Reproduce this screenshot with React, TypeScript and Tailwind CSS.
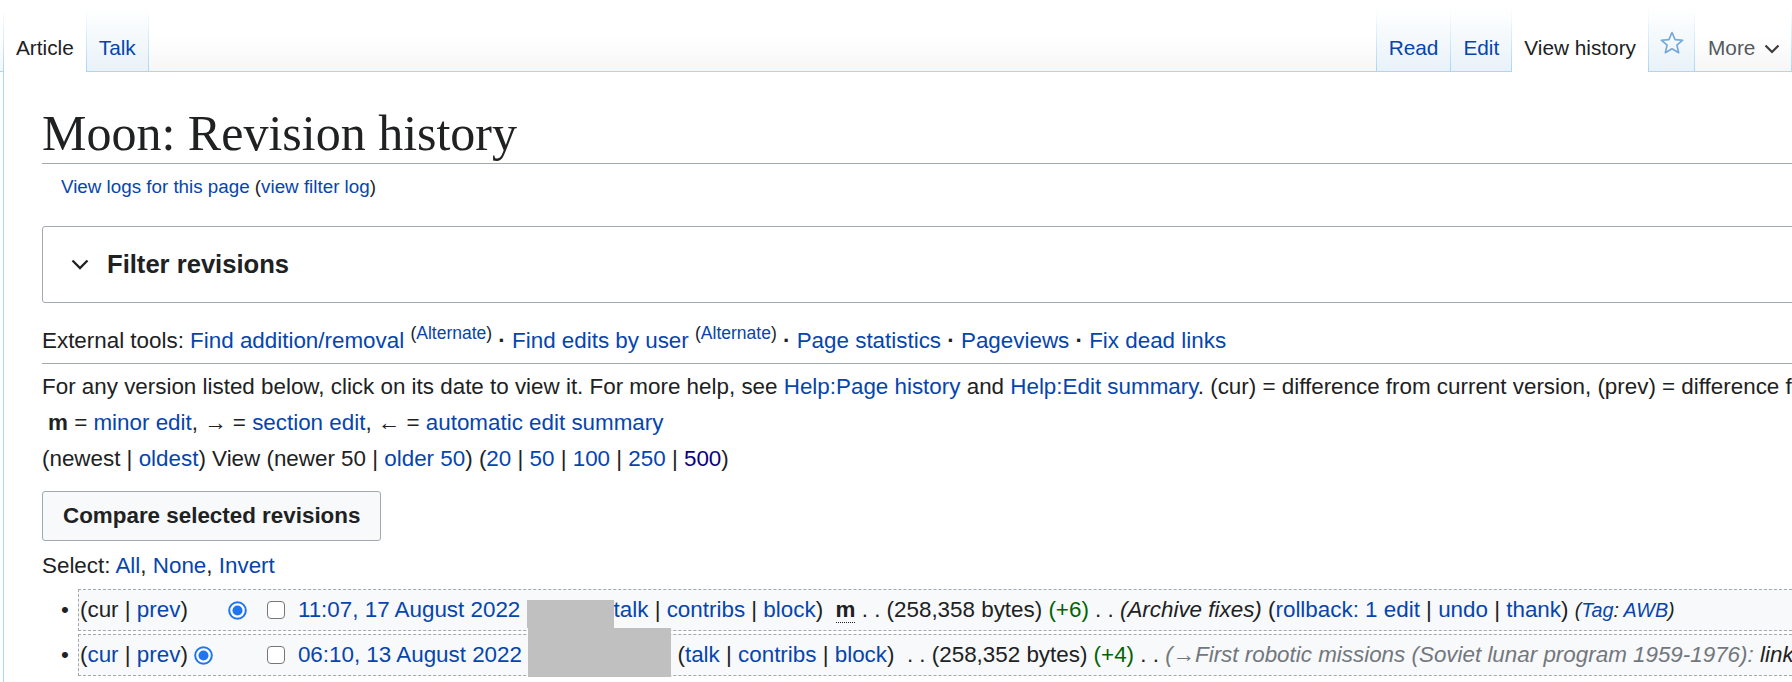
import React from "react";

const SANS = "font-['Liberation_Sans',Arial,sans-serif]";
const LINK = "text-[#0645ad]";

function Divider() {
  return (
    <div className="w-px self-stretch bg-[linear-gradient(to_bottom,rgba(167,215,249,0)_0%,#a7d7f9_100%)]" />
  );
}

function Tab({ label, selected }: { label: string; selected?: boolean }) {
  return (
    <div
      className={
        "h-full px-3 pt-[30px] text-[20.8px] leading-[20px] " +
        (selected
          ? "bg-white text-[#202122]"
          : "bg-[linear-gradient(to_top,#a7d7f9_0px,#a7d7f9_1px,#e8f2f8_1px,#ffffff_100%)] " + LINK)
      }
    >
      {label}
    </div>
  );
}

function Star() {
  return (
    <div className="flex h-full w-[45px] justify-center bg-[linear-gradient(to_top,#a7d7f9_0px,#a7d7f9_1px,#e8f2f8_1px,#ffffff_100%)] pt-[22px]">
      <svg width="26" height="26" viewBox="0 0 26 26">
        <path
          d="M13 2.5l3.1 7.1 7.6.6-5.8 5 1.8 7.5L13 18.7l-6.7 4 1.8-7.5-5.8-5 7.6-.6z"
          fill="none"
          stroke="#72a7d9"
          strokeWidth="1.6"
          strokeLinejoin="round"
        />
      </svg>
    </div>
  );
}

function More() {
  return (
    <div className="flex h-full w-[96px] items-start gap-[9px] pl-[13px] pt-[30px] text-[20.8px] leading-[20px] text-[#54595d]">
      <span>More</span>
      <svg width="16" height="10" viewBox="0 0 16 10" className="mt-[6px]">
        <path d="M1.5 1.5l6.5 6.5 6.5-6.5" fill="none" stroke="#3a3d40" strokeWidth="2.2" />
      </svg>
    </div>
  );
}

function Radio({ hidden }: { hidden?: boolean }) {
  return (
    <svg width="19" height="19" viewBox="0 0 19 19" className={hidden ? "invisible" : ""}>
      <circle cx="9.5" cy="9.5" r="8.3" fill="#fff" stroke="#1f76ee" strokeWidth="2" />
      <circle cx="9.5" cy="9.5" r="5" fill="#1f76ee" />
    </svg>
  );
}

function Checkbox() {
  return <span className="inline-block h-[18px] w-[18px] rounded-[4px] border-[1.5px] border-[#767676] bg-white" />;
}

function Sep() {
  return <span className="text-[#202122]"> | </span>;
}

function Row({
  first,
  date,
  children,
}: {
  first?: boolean;
  date: string;
  children: React.ReactNode;
}) {
  return (
    <div className="flex h-[42px] items-center pl-[19px]">
      <span className="w-[17px]">•</span>
      <div className="relative -mr-[60px] flex h-full flex-1 items-center whitespace-nowrap border border-dashed border-[#a2a9b1] bg-[#f8f9fa] pl-px">
        <span>
          ({first ? "cur" : <span className={LINK}>cur</span>}
          <Sep />
          <span className={LINK}>prev</span>)
        </span>
        <span className="ml-[6px] flex">
          <Radio hidden={first} />
        </span>
        <span className="ml-[15px] flex">
          <Radio hidden={!first} />
        </span>
        <span className="ml-[20px] flex">
          <Checkbox />
        </span>
        <span className="ml-[13px] whitespace-pre">
          <span className={LINK}>{date}</span>
          {children}
        </span>
      </div>
    </div>
  );
}

export default function App() {
  return (
    <div className={"h-[682px] w-[1792px] overflow-hidden bg-white text-[#202122] " + SANS}>
      {/* tabs */}
      <div className="flex h-[72px] items-end justify-between border-b border-[#a7d7f9] bg-[linear-gradient(#ffffff_50%,#f6f6f6_100%)] pl-[3px]">
        <div className="-mb-px flex h-[64px]">
          <Divider />
          <Tab label="Article" selected />
          <Divider />
          <Tab label="Talk" />
          <Divider />
        </div>
        <div className="-mb-px flex h-[64px]">
          <Divider />
          <Tab label="Read" />
          <Divider />
          <Tab label="Edit" />
          <Divider />
          <Tab label="View history" selected />
          <Divider />
          <Star />
          <Divider />
          <More />
          <Divider />
        </div>
      </div>

      {/* content */}
      <div className="ml-[3px] h-full border-l border-[#a7d7f9] pl-[38px] pt-[31px] text-[22.4px] leading-[35.84px]">
        <h1 className="border-b border-[#a2a9b1] font-['Liberation_Serif',Georgia,serif] text-[50px] font-normal leading-[60px]">
          Moon: Revision history
        </h1>
        <div className="ml-[19px] mt-[8px] text-[18.8px] leading-[30px]">
          <span className={LINK}>View logs for this page</span> (<span className={LINK}>view filter log</span>)
        </div>

        <div className="-mr-[40px] mt-[24px] flex h-[77px] items-center gap-[18px] rounded-[3px] border border-[#a2a9b1] pl-[28px]">
          <svg width="18" height="11" viewBox="0 0 18 11">
            <path d="M1.5 1.5l7.5 7.5 7.5-7.5" fill="none" stroke="#202122" strokeWidth="2.3" />
          </svg>
          <span className="text-[25.6px] font-bold">Filter revisions</span>
        </div>

        <div className="mt-[20px] whitespace-nowrap border-b border-[#a2a9b1] pb-[4px]">
          External tools: <span className={LINK}>Find addition/removal</span>{" "}
          <sup className="text-[17.5px]">
            (<span className={LINK}>Alternate</span>)
          </sup>{" "}
          <b>·</b> <span className={LINK}>Find edits by user</span>{" "}
          <sup className="text-[17.5px]">
            (<span className={LINK}>Alternate</span>)
          </sup>{" "}
          <b>·</b> <span className={LINK}>Page statistics</span> <b>·</b>{" "}
          <span className={LINK}>Pageviews</span> <b>·</b> <span className={LINK}>Fix dead links</span>
        </div>

        <div className="mt-[5px] whitespace-nowrap">
          For any version listed below, click on its date to view it. For more help, see{" "}
          <span className={LINK}>Help:Page history</span> and <span className={LINK}>Help:Edit summary</span>. (cur)
          = difference from current version, (prev) = difference from preceding version,
        </div>
        <div className="ml-[6px] whitespace-nowrap">
          <b>m</b> = <span className={LINK}>minor edit</span>, → = <span className={LINK}>section edit</span>, ← ={" "}
          <span className={LINK}>automatic edit summary</span>
        </div>
        <div className="whitespace-nowrap">
          (newest | <span className={LINK}>oldest</span>) View (newer 50 | <span className={LINK}>older 50</span>) (
          <span className={LINK}>20</span> | <span className={LINK}>50</span> | <span className={LINK}>100</span> |{" "}
          <span className={LINK}>250</span> | <span className="text-[#0b0080]">500</span>)
        </div>

        <button className="mt-[15px] flex h-[50px] items-center rounded-[3px] border border-[#a2a9b1] bg-[#f8f9fa] px-[20px] text-[22.4px] font-bold text-[#202122]">
          Compare selected revisions
        </button>

        <div className="mt-[7px]">
          Select: <span className={LINK}>All</span>, <span className={LINK}>None</span>,{" "}
          <span className={LINK}>Invert</span>
        </div>

        <div className="mt-[5px]">
          <Row first date="11:07, 17 August 2022">
            {" "}
            <span className="relative top-[3px] z-10 inline-block h-[28px] w-[87px] bg-[#c0c0c0] align-middle" />
            <span className={LINK}>talk</span>
            <Sep />
            <span className={LINK}>contribs</span>
            <Sep />
            <span className={LINK}>block</span>){"  "}
            <abbr className="font-bold no-underline [border-bottom:1px_dotted_#202122]">m</abbr>
            {" . . (258,358 bytes) "}
            <span className="text-[#006400]">(+6)</span>
            {" . . "}
            <i>(Archive fixes)</i> (<span className={LINK}>rollback: 1 edit</span>
            <Sep />
            <span className={LINK}>undo</span>
            <Sep />
            <span className={LINK}>thank</span>){" "}
            <i className="text-[19.7px]">
              (<span className={LINK}>Tag</span>: <span className={LINK}>AWB</span>)
            </i>
          </Row>
          <div className="mt-[3px]">
            <Row date="06:10, 13 August 2022">
              {" "}
              <span className="relative -top-[4px] z-10 -my-[12px] inline-block h-[49px] w-[143px] bg-[#c0c0c0] align-middle" />{" "}
              (<span className={LINK}>talk</span>
              <Sep />
              <span className={LINK}>contribs</span>
              <Sep />
              <span className={LINK}>block</span>){"  . . (258,352 bytes) "}
              <span className="text-[#006400]">(+4)</span>
              {" . . "}
              <i className="text-[#72777d]">(→First robotic missions (Soviet lunar program 1959-1976):</i>
              <i> link</i>
            </Row>
          </div>
        </div>
      </div>
    </div>
  );
}
